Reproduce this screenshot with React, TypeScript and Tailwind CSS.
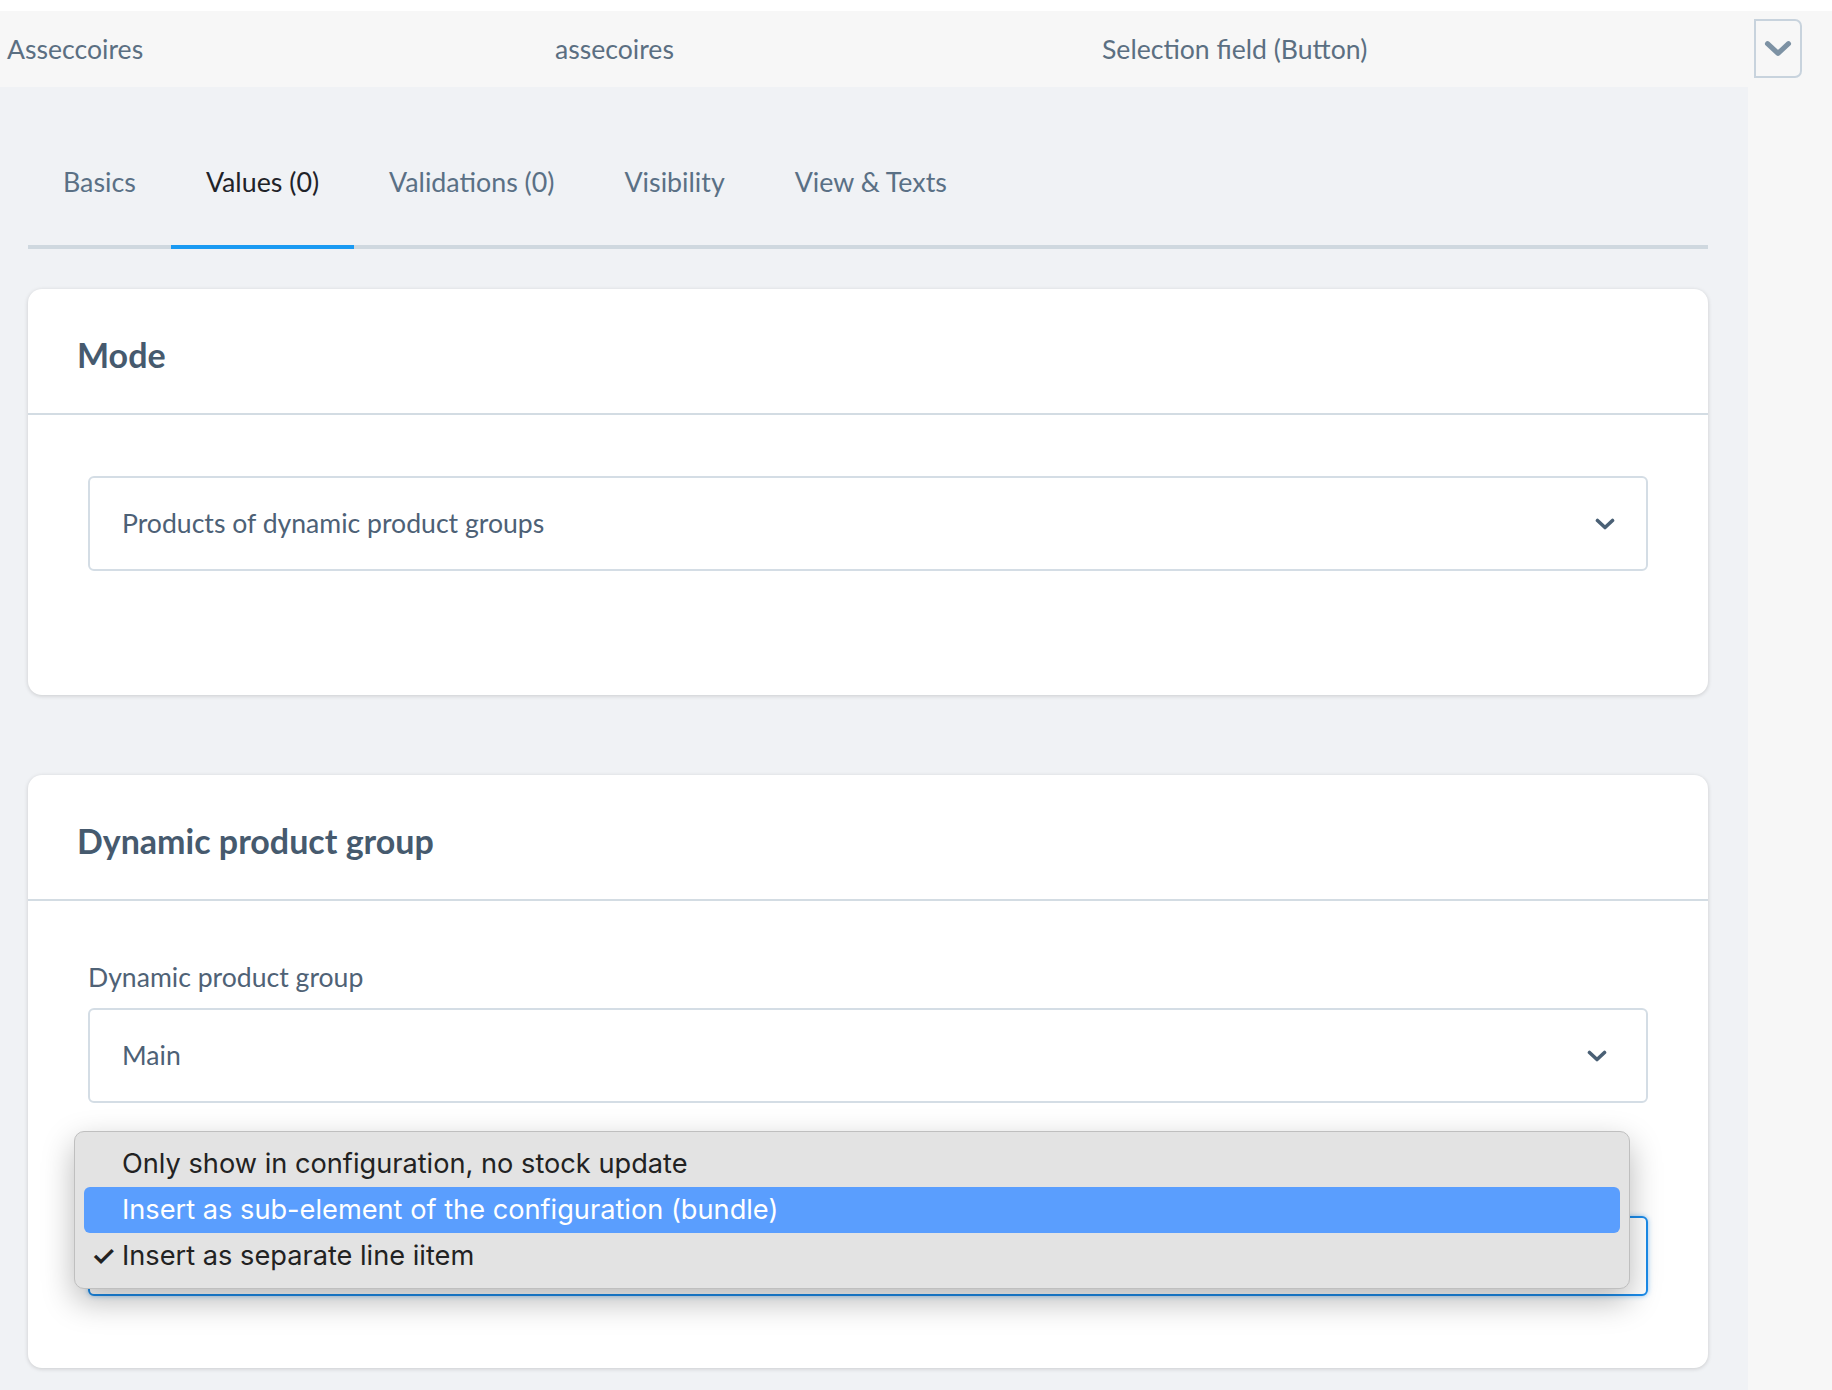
import React from 'react';

const tabs = [
  { label: 'Basics', active: false },
  { label: 'Values (0)', active: true },
  { label: 'Validations (0)', active: false },
  { label: 'Visibility', active: false },
  { label: 'View & Texts', active: false },
];

const options = [
  { label: 'Only show in configuration, no stock update', highlighted: false, checked: false },
  { label: 'Insert as sub-element of the configuration (bundle)', highlighted: true, checked: false },
  { label: 'Insert as separate line iitem', highlighted: false, checked: true },
];

const Chevron: React.FC<{ className?: string }> = ({ className }) => (
  <svg viewBox="0 0 20 12" className={className} fill="none" stroke="currentColor" strokeWidth="3.6" strokeLinecap="round" strokeLinejoin="round">
    <path d="M2.5 2.5 L10 9.5 L17.5 2.5" />
  </svg>
);

const SelectBox: React.FC<{ value: string; chevronPr?: string }> = ({ value, chevronPr = 'pr-[31px]' }) => (
  <div className={`flex h-[95px] items-center justify-between rounded-[6px] border-2 border-[#d4dde5] bg-white pl-[32px] ${chevronPr}`}>
    <span className="text-[26.6px] text-[#4d6176]">{value}</span>
    <Chevron className="h-[12px] w-[20px] text-[#4a6075]" />
  </div>
);

const Card: React.FC<{ title: string; children: React.ReactNode; bodyClass: string }> = ({ title, children, bodyClass }) => (
  <section className="rounded-[14px] bg-white shadow-[0_1px_4px_rgba(0,0,0,0.16)]">
    <div className="flex h-[126px] items-center border-b-2 border-[#d3dce3] pl-[49px] pt-[6px]">
      <h2 className="text-[34px] font-bold text-[#465a6e]">{title}</h2>
    </div>
    <div className={bodyClass}>{children}</div>
  </section>
);

export default function App() {
  return (
    <div className="flex h-screen flex-col overflow-hidden bg-white pt-[11px] font-['Lato',sans-serif]">
      <div className="flex flex-1">
        <div className="flex w-[1748px] flex-col">
          {/* record row */}
          <div className="grid h-[76px] grid-cols-[548px_547px_1fr] items-center bg-[#f7f7f7] pl-[7px] pt-[2px] text-[26.6px] text-[#5b6f82]">
            <span>Asseccoires</span>
            <span>assecoires</span>
            <span>Selection field (Button)</span>
          </div>

          <main className="flex-1 bg-[#f0f2f5] pl-[28px] pr-[40px] pt-[33px]">
            {/* tabs */}
            <nav className="flex border-b-4 border-[#cfd8df]">
              {tabs.map((tab) => (
                <div
                  key={tab.label}
                  className={`-mb-[4px] flex h-[129px] items-center border-b-4 px-[35px] text-[26.8px] ${
                    tab.active ? 'border-[#1a9af2] text-[#1f2329]' : 'border-transparent text-[#5a7085]'
                  }`}
                >
                  {tab.label}
                </div>
              ))}
            </nav>

            <div className="mt-[40px] flex flex-col gap-[80px]">
              <Card title="Mode" bodyClass="px-[60px] pb-[124px] pt-[61px]">
                <SelectBox value="Products of dynamic product groups" />
              </Card>

              <Card title="Dynamic product group" bodyClass="px-[60px] pb-[72px] pt-[59px]">
                <label className="block text-[26.6px] leading-[34px] text-[#4f6276]">Dynamic product group</label>
                <div className="mt-[14px]">
                  <SelectBox value="Main" chevronPr="pr-[39px]" />
                </div>

                <div className="relative mt-[113px]">
                  <div className="h-[80px] rounded-[6px] border-2 border-[#1b8ceb] bg-white shadow-[0_0_5px_rgba(27,140,235,0.45)]" />

                  {/* native select popup */}
                  <div className="absolute left-[-14px] top-[-85px] w-[1556px] rounded-[10px] border border-[#bfbfbf] bg-[#e3e3e3] pb-[9px] pt-[9px] font-['Inter',sans-serif] shadow-[0_12px_32px_rgba(0,0,0,0.28)]">
                    {options.map((opt) => (
                      <div
                        key={opt.label}
                        className={`mx-[9px] flex h-[46px] items-center rounded-[6px] text-[27.2px] ${
                          opt.highlighted ? 'bg-[#5a9efe] text-white' : 'text-[#222222]'
                        }`}
                      >
                        <span className="w-[38px] pl-[7px] text-[28px] font-semibold leading-none">{opt.checked ? '✓' : ''}</span>
                        <span>{opt.label}</span>
                      </div>
                    ))}
                  </div>
                </div>
              </Card>
            </div>
          </main>
        </div>

        {/* right rail */}
        <aside className="flex-1 bg-[#f7f7f7] pl-[6px] pt-[8px]">
          <button className="flex h-[59px] w-[48px] items-center justify-center rounded-r-[7px] border-2 border-[#c8d3dd] bg-[#f7f7f7]">
            <Chevron className="h-[17px] w-[28px] text-[#7d92a4]" />
          </button>
        </aside>
      </div>
    </div>
  );
}
